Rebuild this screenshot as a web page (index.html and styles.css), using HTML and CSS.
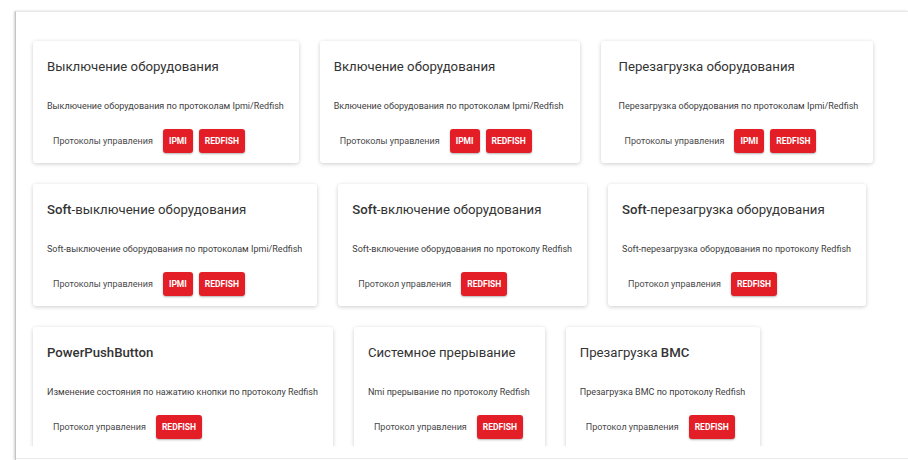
FILE: index.html
```html
<!DOCTYPE html>
<html lang="ru">
<head>
<meta charset="utf-8">
<title>Управление питанием</title>
<link rel="stylesheet" href="styles.css">
</head>
<body>
<main class="panel">
  <section class="scroll">
    <div class="grid">
      <article class="card">
        <h3 class="card-title">Выключение оборудования</h3>
        <p class="card-desc">Выключение оборудования по протоколам Ipmi/Redfish</p>
        <div class="protocols"><span class="protocols-label">Протоколы управления</span><span class="chip">IPMI</span><span class="chip">REDFISH</span></div>
      </article>
      <article class="card card-roomy">
        <h3 class="card-title">Включение оборудования</h3>
        <p class="card-desc">Включение оборудования по протоколам Ipmi/Redfish</p>
        <div class="protocols"><span class="protocols-label">Протоколы управления</span><span class="chip">IPMI</span><span class="chip">REDFISH</span></div>
      </article>
      <article class="card card-wide">
        <h3 class="card-title">Перезагрузка оборудования</h3>
        <p class="card-desc">Перезагрузка оборудования по протоколам Ipmi/Redfish</p>
        <div class="protocols"><span class="protocols-label">Протоколы управления</span><span class="chip">IPMI</span><span class="chip">REDFISH</span></div>
      </article>
      <article class="card">
        <h3 class="card-title"><span class="lat">Soft</span>-выключение оборудования</h3>
        <p class="card-desc">Soft-выключение оборудования по протоколам Ipmi/Redfish</p>
        <div class="protocols"><span class="protocols-label">Протоколы управления</span><span class="chip">IPMI</span><span class="chip">REDFISH</span></div>
      </article>
      <article class="card">
        <h3 class="card-title"><span class="lat">Soft</span>-включение оборудования</h3>
        <p class="card-desc">Soft-включение оборудования по протоколу Redfish</p>
        <div class="protocols"><span class="protocols-label">Протокол управления</span><span class="chip">REDFISH</span></div>
      </article>
      <article class="card">
        <h3 class="card-title"><span class="lat">Soft</span>-перезагрузка оборудования</h3>
        <p class="card-desc">Soft-перезагрузка оборудования по протоколу Redfish</p>
        <div class="protocols"><span class="protocols-label">Протокол управления</span><span class="chip">REDFISH</span></div>
      </article>
      <article class="card">
        <h3 class="card-title"><span class="lat">PowerPushButton</span></h3>
        <p class="card-desc">Изменение состояния по нажатию кнопки по протоколу Redfish</p>
        <div class="protocols"><span class="protocols-label">Протокол управления</span><span class="chip">REDFISH</span></div>
      </article>
      <article class="card">
        <h3 class="card-title">Системное прерывание</h3>
        <p class="card-desc">Nmi прерывание по протоколу Redfish</p>
        <div class="protocols"><span class="protocols-label">Протокол управления</span><span class="chip">REDFISH</span></div>
      </article>
      <article class="card">
        <h3 class="card-title">Презагрузка <span class="lat">BMC</span></h3>
        <p class="card-desc">Презагрузка BMC по протоколу Redfish</p>
        <div class="protocols"><span class="protocols-label">Протокол управления</span><span class="chip">REDFISH</span></div>
      </article>
    </div>
  </section>
  <footer class="panel-foot"></footer>
</main>
</body>
</html>
```
FILE: styles.css
```css
html {
  overflow: hidden;
  background: #ffffff;
}

body {
  margin: 0;
  padding: 0;
  font-family: Roboto, "Noto Sans", "Liberation Sans", sans-serif;
}

/* page sheet: a soft left edge and a hairline along the top */
.panel {
  margin: 11px 0 0 15px;
  height: 449px;
  background: #ffffff;
  border-top: 1px solid #e9e9e9;
  border-left: 1px solid #c4c4c4;
  box-shadow: -1px 0 2px rgba(0, 0, 0, 0.18);
  box-sizing: border-box;
}

.scroll {
  height: 434px;
  overflow: hidden;
  padding: 29px 0 0 17px;
  box-sizing: border-box;
}

.grid {
  width: 866px;
  display: flex;
  flex-wrap: wrap;
  gap: 21px 21px;
  align-items: flex-start;
}

.card {
  background: #ffffff;
  border-radius: 3px;
  box-shadow: 0 1px 4px rgba(0, 0, 0, 0.2);
  padding: 16px 15px 10px 14px;
  box-sizing: border-box;
  height: 122px;
}

.card-roomy {
  padding-right: 17px;
}

.card-wide {
  padding-left: 17px;
}

.card-title {
  margin: 0;
  font-size: 13.2px;
  line-height: 20px;
  font-weight: 400;
  color: #333333;
  white-space: nowrap;
}

.card-title .lat {
  font-weight: 500;
}

.card-desc {
  margin: 23px 0 0;
  font-size: 9px;
  line-height: 12px;
  color: #404040;
  white-space: nowrap;
}

.protocols {
  margin-top: 17px;
  display: flex;
  align-items: center;
  gap: 6px;
  padding-left: 6px;
}

.protocols-label {
  font-size: 9px;
  color: #4a4a4a;
  margin-right: 4px;
  white-space: nowrap;
}

.chip {
  display: inline-flex;
  align-items: center;
  height: 24px;
  padding: 0 6px;
  border-radius: 3px;
  background: #e31e27;
  color: #ffffff;
  font-size: 8.5px;
  font-weight: 700;
  box-shadow: 0 1px 2px rgba(0, 0, 0, 0.3);
}

.panel-foot {
  height: 12px;
  border-bottom: 1px solid #ececec;
}
```
